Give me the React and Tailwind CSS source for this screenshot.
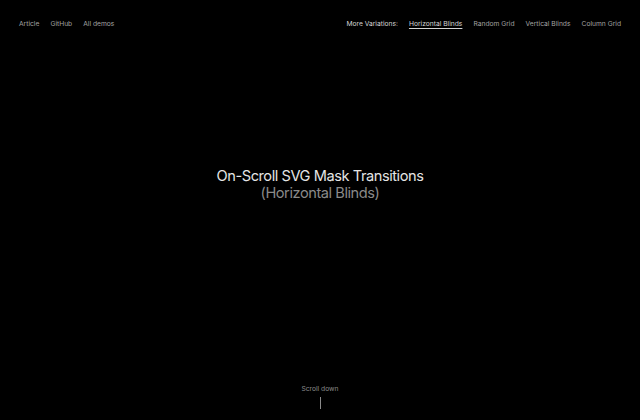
export default function App() {
  return (
    <div className="w-[640px] h-[420px] bg-black text-[#a3a3a3] flex flex-col overflow-hidden" style={{ fontFamily: 'Inter, "Liberation Sans", sans-serif' }}>
      {/* Top frame */}
      <header className="flex justify-between items-center pl-[19px] pr-[19px] pt-[18px] text-[6.7px] leading-[12px]">
        <nav className="flex gap-[11px]">
          <span>Article</span>
          <span>GitHub</span>
          <span>All demos</span>
        </nav>
        <nav className="flex gap-[11px]">
          <span className="text-[#d4d4d4]">More Variations:</span>
          <span className="text-[#d4d4d4] underline underline-offset-2">Horizontal Blinds</span>
          <span>Random Grid</span>
          <span>Vertical Blinds</span>
          <span>Column Grid</span>
        </nav>
      </header>

      {/* Intro */}
      <main className="flex-1 flex flex-col items-center justify-center text-center pb-[44px]">
        <h1 className="text-[14.6px] leading-[17px] tracking-[-0.03em] text-[#e5e5e5] font-normal">
          On-Scroll SVG Mask Transitions
          <br />
          <span className="text-[#8a8a8a]">(Horizontal Blinds)</span>
        </h1>
      </main>

      {/* Scroll hint */}
      <footer className="flex flex-col items-center pb-[11px] gap-[2px]">
        <span className="text-[6.7px] leading-[12px] text-[#8a8a8a]">Scroll down</span>
        <span className="w-px h-[12px] bg-[#8a8a8a]" />
      </footer>
    </div>
  )
}
